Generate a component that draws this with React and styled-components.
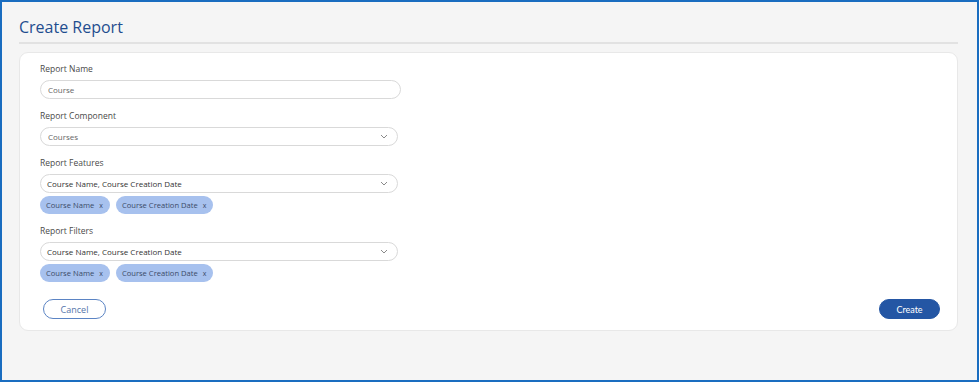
import styled, { createGlobalStyle } from "styled-components"

const GlobalStyle = createGlobalStyle`
  html, body {
    margin: 0;
    padding: 0;
    background: #f5f5f5;
  }
  * {
    box-sizing: border-box;
  }
`

const Frame = styled.div`
  width: 100vw;
  height: 100vh;
  border: 2px solid #1a6dc0;
  background: #f5f5f5;
  padding: 0 19px 0 17px;
  font-family: "Open Sans", "Liberation Sans", sans-serif;
  overflow: hidden;
`

const Title = styled.h1`
  margin: 0;
  padding-top: 15px;
  height: 42px;
  font-size: 16px;
  font-weight: 400;
  color: #1f4d8f;
  line-height: 20px;
  border-bottom: 2px solid #e2e2e2;
`

const Card = styled.div`
  margin-top: 8px;
  background: #fff;
  border: 1px solid #e8e8e8;
  border-radius: 9px;
  padding: 11px 17px 11px 20px;
  height: 279px;
`

const Group = styled.div`
  margin-bottom: ${(p) => (p.$last ? "0" : "12px")};
`

const Label = styled.div`
  font-size: 8.5px;
  line-height: 10px;
  color: #4a4a4a;
  margin-bottom: 6px;
`

const Field = styled.div`
  display: flex;
  align-items: center;
  justify-content: space-between;
  width: ${(p) => p.$w}px;
  height: 19px;
  border: 1px solid #d9d9d9;
  border-radius: 10px;
  padding: 0 9px 0 ${(p) => (p.$strong ? "6px" : "7px")};
  font-size: 8px;
  color: ${(p) => (p.$strong ? "#333" : "#666")};
`

const Chevron = () => (
  <svg width="8" height="5" viewBox="0 0 8 5">
    <path d="M1 1 L4 4 L7 1" fill="none" stroke="#8a8a8a" strokeWidth="1" />
  </svg>
)

const Chips = styled.div`
  display: flex;
  gap: 6px;
  margin-top: 3px;
`

const Chip = styled.div`
  display: flex;
  align-items: center;
  height: 18px;
  padding: 0 7px 0 6px;
  border-radius: 9px;
  background: #a7c1ee;
  color: #3b4b68;
  font-size: 7.6px;
  gap: 5px;
`

const Close = styled.span`
  font-size: 7px;
`

const Actions = styled.div`
  display: flex;
  justify-content: space-between;
  align-items: center;
  margin-top: 17px;
  padding-left: 3px;
`

const Button = styled.button`
  height: 20px;
  width: ${(p) => p.$w}px;
  border-radius: 10px;
  font-size: 9px;
  font-family: ${(p) => (p.$primary ? `"Lato", sans-serif` : `"Open Sans", sans-serif`)};
  border: 1px solid ${(p) => (p.$primary ? "#2456a4" : "#5b84c4")};
  background: ${(p) => (p.$primary ? "#2456a4" : "#fff")};
  color: ${(p) => (p.$primary ? "#fff" : "#5575aa")};
  padding: 0;
`

function Select({ value }) {
  return (
    <Field $w={358} $strong>
      <span>{value}</span>
      <Chevron />
    </Field>
  )
}

function ChipList({ items }) {
  return (
    <Chips>
      {items.map((t) => (
        <Chip key={t}>
          {t}
          <Close>x</Close>
        </Chip>
      ))}
    </Chips>
  )
}

function App() {
  const picked = ["Course Name", "Course Creation Date"]
  return (
    <>
      <GlobalStyle />
      <Frame>
        <Title>Create Report</Title>
        <Card>
          <Group>
            <Label>Report Name</Label>
            <Field $w={361}>Course</Field>
          </Group>
          <Group>
            <Label>Report Component</Label>
            <Field $w={358}>
              <span>Courses</span>
              <Chevron />
            </Field>
          </Group>
          <Group>
            <Label>Report Features</Label>
            <Select value="Course Name, Course Creation Date" />
            <ChipList items={picked} />
          </Group>
          <Group $last>
            <Label>Report Filters</Label>
            <Select value="Course Name, Course Creation Date" />
            <ChipList items={picked} />
          </Group>
          <Actions>
            <Button $w={63}>Cancel</Button>
            <Button $w={61} $primary>Create</Button>
          </Actions>
        </Card>
      </Frame>
    </>
  )
}

export default App
